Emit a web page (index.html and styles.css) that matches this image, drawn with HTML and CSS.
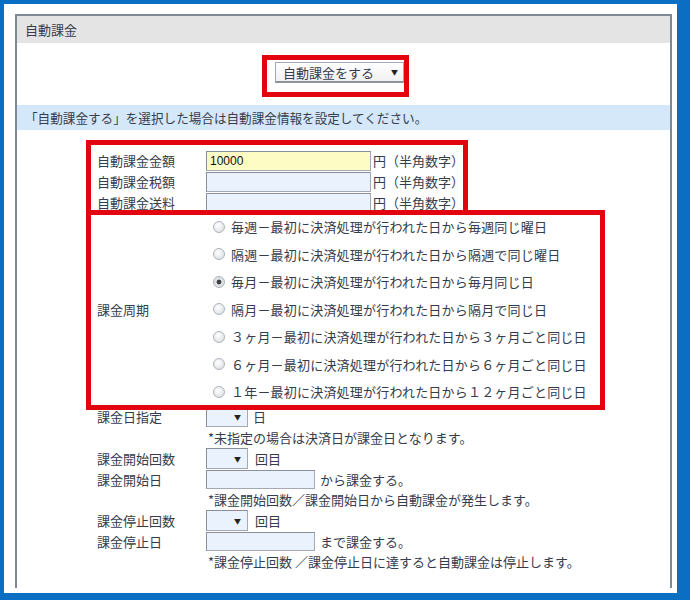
FILE: index.html
```html
<!DOCTYPE html>
<html lang="ja">
<head>
  <meta charset="UTF-8">
  <title>自動課金</title>
  <link rel="stylesheet" href="styles.css">
</head>
<body>

<div class="frame">
  <div class="panel">
    <div class="panel-head">自動課金</div>

    <div class="mode-row">
      <div class="select wide"><span>自動課金をする</span><span class="arrow">▼</span></div>
    </div>

    <div class="info">「自動課金する」を選択した場合は自動課金情報を設定してください。</div>

    <div class="form">
      <div class="row">
        <div class="label">自動課金金額</div>
        <input class="input amount filled" type="text" value="10000">
        <span class="unit">円（半角数字）</span>
      </div>
      <div class="row">
        <div class="label">自動課金税額</div>
        <input class="input amount" type="text">
        <span class="unit">円（半角数字）</span>
      </div>
      <div class="row">
        <div class="label">自動課金送料</div>
        <input class="input amount" type="text">
        <span class="unit">円（半角数字）</span>
      </div>

      <div class="row period">
        <div class="label">課金周期</div>
        <div class="radios">
          <div class="radio-line"><span class="radio"></span>毎週－最初に決済処理が行われた日から毎週同じ曜日</div>
          <div class="radio-line"><span class="radio"></span>隔週－最初に決済処理が行われた日から隔週で同じ曜日</div>
          <div class="radio-line"><span class="radio checked"></span>毎月－最初に決済処理が行われた日から毎月同じ日</div>
          <div class="radio-line"><span class="radio"></span>隔月－最初に決済処理が行われた日から隔月で同じ日</div>
          <div class="radio-line"><span class="radio"></span>３ヶ月－最初に決済処理が行われた日から３ヶ月ごと同じ日</div>
          <div class="radio-line"><span class="radio"></span>６ヶ月－最初に決済処理が行われた日から６ヶ月ごと同じ日</div>
          <div class="radio-line"><span class="radio"></span>１年－最初に決済処理が行われた日から１２ヶ月ごと同じ日</div>
        </div>
      </div>

      <div class="row tall">
        <div class="label">課金日指定</div>
        <div class="select small"><span class="arrow">▼</span></div>
        <span class="unit">日</span>
      </div>
      <div class="row note">*未指定の場合は決済日が課金日となります。</div>

      <div class="row tall">
        <div class="label">課金開始回数</div>
        <div class="select small"><span class="arrow">▼</span></div>
        <span class="unit wide-gap">回目</span>
      </div>
      <div class="row short">
        <div class="label">課金開始日</div>
        <input class="input date" type="text">
        <span class="unit">から課金する。</span>
      </div>
      <div class="row note">*課金開始回数／課金開始日から自動課金が発生します。</div>

      <div class="row tall">
        <div class="label">課金停止回数</div>
        <div class="select small"><span class="arrow">▼</span></div>
        <span class="unit wide-gap">回目</span>
      </div>
      <div class="row short">
        <div class="label">課金停止日</div>
        <input class="input date" type="text">
        <span class="unit">まで課金する。</span>
      </div>
      <div class="row note">*課金停止回数 ／課金停止日に達すると自動課金は停止します。</div>
    </div>
  </div>
</div>

<!-- red annotation boxes -->
<div class="mark mark-select"></div>
<div class="mark mark-fields"></div>
<div class="mark mark-period"></div>

</body>
</html>
```

FILE: styles.css
```css
:root {
  --text: #353c4c;
  --red: #e2050f;
  --input-bg: #eaf3fd;
  --border: #a3aab3;
}

body {
  margin: 0;
  height: 600px;
  overflow: hidden;
  position: relative;
  background: #0a6ec3;
  font-family: "Noto Sans CJK JP", sans-serif;
  color: var(--text);
}

.frame {
  margin: 4px 13px 0 4px;
  height: 589px;
  padding: 10px 5px 0 11px;
  box-sizing: border-box;
  background: #fff;
}

.panel {
  height: 574px;
  border: 2px solid #7e8995;
  border-bottom: none;
  box-sizing: border-box;
}

.panel-head {
  height: 27px;
  line-height: 27px;
  padding-left: 8px;
  background: #e4e4e4;
  font-size: 13px;
}

.mode-row {
  display: flex;
  justify-content: center;
  padding: 19px 8px 22px 0;
}

.select {
  display: flex;
  align-items: center;
  justify-content: space-between;
  box-sizing: border-box;
  border: 1px solid var(--border);
  font-size: 13px;
}

.select.wide {
  width: 129px;
  height: 21px;
  padding: 0 5px 0 7px;
  background: linear-gradient(#ffffff, #f1f1f1);
  border-bottom: 2px solid #8d949c;
}

.select.small {
  width: 42px;
  height: 21px;
  padding-right: 6px;
  justify-content: flex-end;
  background: var(--input-bg);
  border-top-color: #8a9099;
  border-left-color: #8a9099;
}

.arrow {
  font-size: 7px;
  color: #222;
}

.info {
  height: 25px;
  line-height: 25px;
  padding-left: 8px;
  background: #d5e8f9;
  font-size: 12.6px;
}

.form {
  padding: 20px 0 0 80px;
  font-size: 13px;
}

.row {
  display: flex;
  align-items: center;
  height: 21px;
}

.row.tall {
  height: 22px;
}

.row.short,
.row.note {
  height: 20px;
}

.row.note {
  padding-left: 111px;
}

.label {
  width: 109px;
  flex: none;
}

.input {
  height: 20px;
  box-sizing: border-box;
  margin: 0;
  padding: 0 3px;
  border: 1px solid var(--border);
  border-top-color: #8a9099;
  border-left-color: #8a9099;
  background: var(--input-bg);
  font-family: "Liberation Sans", sans-serif;
  font-size: 12px;
  color: #111;
}

.input.amount {
  width: 165px;
}

.input.filled {
  background: #fdfcc4;
}

.input.date {
  width: 109px;
  height: 19px;
}

.unit {
  margin-left: 2px;
}

.select + .unit {
  margin-left: 5px;
}

.select + .unit.wide-gap {
  margin-left: 7px;
}

.input.date + .unit {
  margin-left: 5px;
}

.row.period {
  height: auto;
}

.radios {
  display: flex;
  flex-direction: column;
}

.radio-line {
  display: flex;
  align-items: center;
  height: 27.5px;
  letter-spacing: 0.2px;
}

.radio {
  width: 12px;
  height: 12px;
  margin: 0 6px 0 7px;
  border-radius: 50%;
  box-sizing: border-box;
  border: 1px solid #aeb3b9;
  background: radial-gradient(circle at 40% 35%, #ffffff, #d6d9dd);
}

.radio.checked {
  background: radial-gradient(circle, #3d3f44 0, #3d3f44 2px, #e3e5e8 2.8px, #d2d5d9 100%);
}

.mark {
  position: absolute;
  box-sizing: border-box;
  border: 5px solid var(--red);
}

.mark-select {
  left: 262px;
  top: 55px;
  width: 147px;
  height: 42px;
}

.mark-fields {
  left: 86px;
  top: 140px;
  width: 382px;
  height: 75px;
  border-bottom: none;
}

.mark-period {
  left: 86px;
  top: 210px;
  width: 519px;
  height: 200px;
}
```
